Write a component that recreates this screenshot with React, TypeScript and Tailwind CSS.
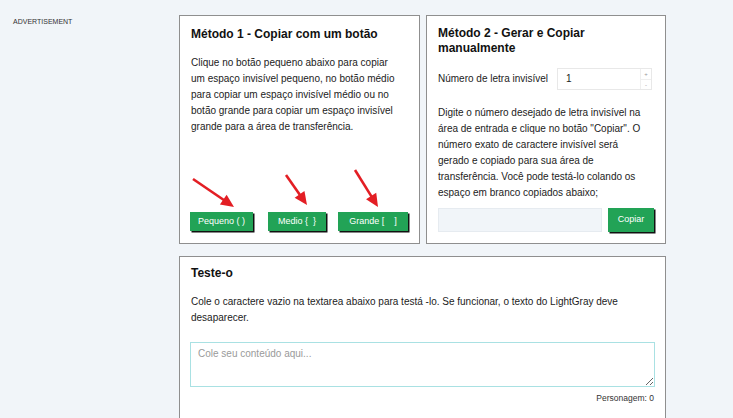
import React from "react";

const font = { fontFamily: '"Liberation Sans", Arial, sans-serif' };

const arrows = [
  { from: [14, 164], to: [55, 192] },
  { from: [107, 160], to: [128, 190] },
  { from: [176, 155], to: [199, 192] },
];

function Arrow({ from, to }: { from: number[]; to: number[] }) {
  const dx = to[0] - from[0];
  const dy = to[1] - from[1];
  const len = Math.hypot(dx, dy);
  const ux = dx / len;
  const uy = dy / len;
  const head = 13;
  const half = 6;
  const bx = to[0] - ux * head;
  const by = to[1] - uy * head;
  const p1 = `${bx - uy * half},${by + ux * half}`;
  const p2 = `${bx + uy * half},${by - ux * half}`;
  return (
    <g>
      <line x1={from[0]} y1={from[1]} x2={bx + ux * 2} y2={by + uy * 2} stroke="#e31e24" strokeWidth="2.6" />
      <polygon points={`${to[0]},${to[1]} ${p1} ${p2}`} fill="#e31e24" />
    </g>
  );
}

function GreenButton({ label, className = "" }: { label: string; className?: string }) {
  return (
    <button
      className={`h-[19px] whitespace-pre bg-[#22a356] text-center text-[9px] leading-[19px] text-white shadow-[1.5px_1.5px_0_#111] ${className}`}
    >
      {label}
    </button>
  );
}

export default function App() {
  return (
    <div className="flex min-h-[418px] bg-[#f1f5f9] text-[#222]" style={font}>
      <aside className="w-[179px] shrink-0 pl-[13px] pt-[18px]">
        <p className="text-[7px] uppercase leading-[8px] text-[#333]">Advertisement</p>
      </aside>

      <main className="w-[487px] pt-[15px]">
        <div className="grid grid-cols-[241px_240px] gap-[6px]">
          <article className="relative flex flex-col border border-[#8f8f8f] bg-white px-[11px] pb-[12px] pt-[11px]">
            <svg className="pointer-events-none absolute left-[-1px] top-[-1px]" width="241" height="229" viewBox="0 0 241 229">
              {arrows.map((a, i) => (
                <Arrow key={i} from={a.from} to={a.to} />
              ))}
            </svg>
            <h2 className="text-[12px] font-bold leading-[15px] text-[#111]">Método 1 - Copiar com um botão</h2>
            <p className="mt-[13px] pr-[8px] text-[10px] leading-[16px]">
              Clique no botão pequeno abaixo para copiar um espaço invisível pequeno, no botão médio para copiar um espaço invisível médio ou no botão grande para copiar um espaço invisível grande para a área de transferência.
            </p>
            <div className="mt-auto flex items-center">
              <GreenButton label="Pequeno ( )" className="ml-[-1px] w-[63px]" />
              <GreenButton label="Medio {  }" className="ml-[15px] w-[58px]" />
              <GreenButton label="Grande [    ]" className="ml-[12px] w-[70px]" />
            </div>
          </article>

          <article className="border border-[#8f8f8f] bg-white px-[11px] pb-[11px] pt-[10px]">
            <h2 className="text-[12px] font-bold leading-[15px] text-[#111]">
              Método 2 - Gerar e Copiar
              <br />
              manualmente
            </h2>
            <div className="mt-[12px] flex items-center">
              <label className="text-[10px] leading-[14px]">Número de letra invisível</label>
              <div className="ml-[9px] flex h-[22px] w-[95px] items-stretch border border-[#e8e8e8]">
                <span className="flex-1 pl-[8px] text-[10px] leading-[20px]">1</span>
                <span className="flex w-[11px] flex-col border-l border-[#efefef] text-center text-[6px] leading-[10px] text-[#999]">
                  <span className="flex-1 border-b border-[#efefef]">+</span>
                  <span className="flex-1">-</span>
                </span>
              </div>
            </div>
            <p className="mt-[15px] pr-[8px] text-[10px] leading-[16px]">
              Digite o número desejado de letra invisível na área de entrada e clique no botão "Copiar". O número exato de caractere invisível será gerado e copiado para sua área de transferência. Você pode testá-lo colando os espaço em branco copiados abaixo;
            </p>
            <div className="mt-[7px] flex items-center gap-[6px]">
              <input className="h-[24px] min-w-0 flex-1 border border-[#e6ebf0] bg-[#f1f5f9] outline-none" />
              <button className="h-[24px] w-[46px] bg-[#22a356] text-[9px] text-white shadow-[1.5px_1.5px_0_#111]">Copiar</button>
            </div>
          </article>
        </div>

        <article className="mt-[12px] border border-[#8f8f8f] bg-white px-[11px] pb-[20px] pt-[9px]">
          <h2 className="text-[12px] font-bold leading-[15px] text-[#111]">Teste-o</h2>
          <p className="mt-[13px] text-[10px] leading-[16px]">
            Cole o caractere vazio na textarea abaixo para testá -lo. Se funcionar, o texto do LightGray deve desaparecer.
          </p>
          <textarea
            placeholder="Cole seu conteúdo aqui..."
            className="mt-[16px] ml-[-1px] block h-[45px] w-[465px] border border-[#a9e1e3] px-[7px] py-[4px] text-[10px] leading-[14px] outline-none placeholder:text-[#9a9a9a]"
            style={font}
          />
          <p className="mt-[5px] text-right text-[8.5px] leading-[12px] text-[#333]">Personagem: 0</p>
        </article>
      </main>
    </div>
  );
}
